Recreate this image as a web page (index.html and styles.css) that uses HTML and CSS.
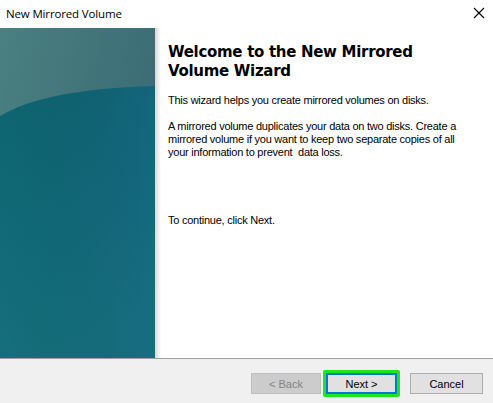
FILE: index.html
```html
<!DOCTYPE html>
<html>
<head>
<meta charset="utf-8">
<link rel="stylesheet" href="styles.css">
</head>
<body>
<div class="window">
  <div class="titlebar">
    <span class="title">New Mirrored Volume</span>
    <svg class="close" width="12" height="12" viewBox="0 0 12 12"><path d="M1 1 L11 11 M11 1 L1 11" stroke="#000" stroke-width="1.1" fill="none"/></svg>
  </div>
  <div class="main">
    <div class="side">
      <svg width="155" height="330" viewBox="0 0 155 330" preserveAspectRatio="none">
        <defs>
          <linearGradient id="top" x1="0" y1="0" x2="1" y2="0.4">
            <stop offset="0" stop-color="#4a8080"/>
            <stop offset="1" stop-color="#3a6b75"/>
          </linearGradient>
          <linearGradient id="low" x1="0" y1="0" x2="0.6" y2="1">
            <stop offset="0" stop-color="#0e6470"/>
            <stop offset="0.55" stop-color="#126c7a"/>
            <stop offset="1" stop-color="#17737f"/>
          </linearGradient>
          <linearGradient id="lowr" x1="0" y1="0" x2="1" y2="0">
            <stop offset="0" stop-color="#000" stop-opacity="0"/>
            <stop offset="1" stop-color="#1a4d8a" stop-opacity="0.18"/>
          </linearGradient>
        </defs>
        <rect width="155" height="330" fill="url(#top)"/>
        <path d="M0 88 C30 70 80 60 155 58 L155 330 L0 330 Z" fill="url(#low)"/>
        <path d="M0 88 C30 70 80 60 155 58 L155 330 L0 330 Z" fill="url(#lowr)"/>
      </svg>
      <div class="shade"></div>
    </div>
    <div class="content">
      <h1 class="heading">Welcome to the New Mirrored Volume Wizard</h1>
      <p class="text">This wizard helps you create mirrored volumes on disks.</p>
      <p class="text">A mirrored volume duplicates your data on two disks. Create a mirrored volume if you want to keep two separate copies of all your information to prevent &nbsp;data loss.</p>
      <p class="text cont">To continue, click Next.</p>
    </div>
  </div>
  <div class="footer">
    <button class="btn back" disabled>&lt; Back</button>
    <span class="focus-ring"><button class="btn next">Next &gt;</button></span>
    <button class="btn cancel">Cancel</button>
  </div>
</div>
</body>
</html>
```
FILE: styles.css
```css
html, body {
  margin: 0;
  padding: 0;
  background: #ffffff;
}
.window {
  width: 493px;
  height: 403px;
  display: flex;
  flex-direction: column;
  overflow: hidden;
}
.titlebar {
  height: 28px;
  display: flex;
  align-items: center;
  justify-content: space-between;
  padding: 0 8px 0 6px;
  box-sizing: border-box;
}
.title {
  font-family: "Open Sans", "Noto Sans", sans-serif;
  font-size: 11.5px;
  letter-spacing: -0.15px;
  color: #000;
  margin-top: -2px;
}
.close {
  display: block;
  margin-top: -2px;
}
.main {
  height: 330px;
  display: flex;
}
.side {
  width: 155px;
  height: 330px;
  position: relative;
  flex: none;
}
.side svg {
  display: block;
}
.shade {
  position: absolute;
  left: 155px;
  top: 0;
  width: 6px;
  height: 330px;
  background: linear-gradient(to right, #d8d8d8, #ffffff);
}
.content {
  padding: 15px 0 0 13px;
  width: 296px;
  font-family: "Liberation Sans", Arial, sans-serif;
  color: #000;
}
.heading {
  font-family: "DejaVu Sans", Verdana, sans-serif;
  font-weight: bold;
  font-size: 15px;
  line-height: 19px;
  margin: 0 0 13px 0;
  letter-spacing: -0.3px;
}
.text {
  font-size: 11px;
  line-height: 13px;
  margin: 0 0 13px 0;
  letter-spacing: -0.24px;
}
.cont {
  margin-top: 55px;
}
.footer {
  flex: 1;
  background: #f0f0f0;
  border-top: 1px solid #a0a0a0;
  display: flex;
  align-items: flex-start;
  padding: 14px 10px 0 0;
  justify-content: flex-end;
}
.btn {
  font-family: "Liberation Sans", Arial, sans-serif;
  font-size: 11px;
  height: 21px;
  background: #e1e1e1;
  border: 1px solid #adadad;
  color: #000;
  padding: 0;
  margin: 0;
  box-sizing: border-box;
}
.back {
  width: 70px;
  background: #cccccc;
  border-color: #bfbfbf;
  color: #838383;
  margin-right: 2px;
}
.focus-ring {
  display: block;
  border: 3px solid #1ee61e;
  border-radius: 2px;
  margin: -3px 10px 0 0;
  height: 21px;
}
.next {
  display: block;
  width: 71px;
  border: 2px solid #0078d7;
}
.cancel {
  width: 73px;
}
```
